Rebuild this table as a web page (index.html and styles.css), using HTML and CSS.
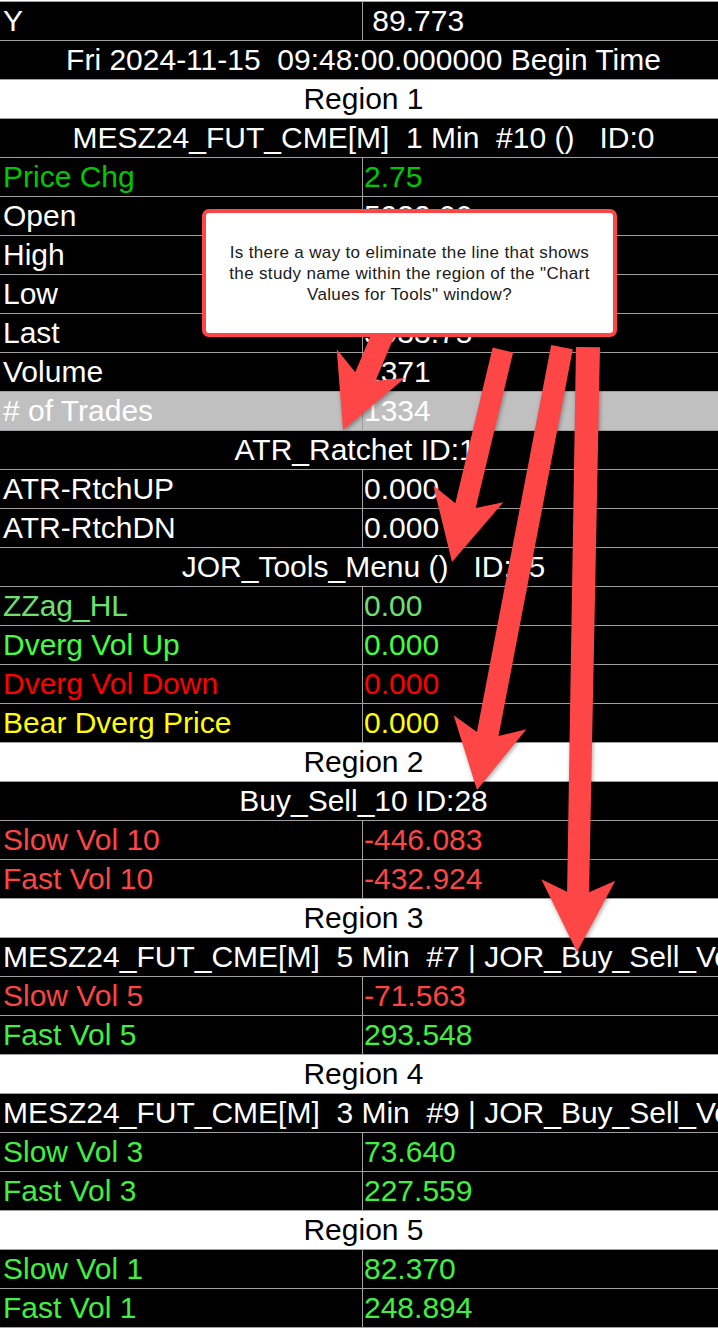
FILE: index.html
```html
<!DOCTYPE html>
<html>
<head>
<meta charset="utf-8">
<link rel="stylesheet" href="styles.css">
</head>
<body>
<div class="page">
  <div class="table">
    <div class="row kv"><span class="lab">Y</span><span class="val"> 89.773</span></div>
    <div class="row center">Fri 2024-11-15  09:48:00.000000 Begin Time</div>
    <div class="row region">Region 1</div>
    <div class="row center">MESZ24_FUT_CME[M]  1 Min  #10 ()   ID:0</div>
    <div class="row kv c-green"><span class="lab">Price Chg</span><span class="val">2.75</span></div>
    <div class="row kv"><span class="lab">Open</span><span class="val">5932.00</span></div>
    <div class="row kv"><span class="lab">High</span><span class="val">5934.50</span></div>
    <div class="row kv"><span class="lab">Low</span><span class="val">5928.75</span></div>
    <div class="row kv"><span class="lab">Last</span><span class="val">5933.75</span></div>
    <div class="row kv"><span class="lab">Volume</span><span class="val">2371</span></div>
    <div class="row kv gray"><span class="lab"># of Trades</span><span class="val">1334</span></div>
    <div class="row center">ATR_Ratchet ID:1  </div>
    <div class="row kv"><span class="lab">ATR-RtchUP</span><span class="val">0.000</span></div>
    <div class="row kv"><span class="lab">ATR-RtchDN</span><span class="val">0.000</span></div>
    <div class="row center">JOR_Tools_Menu ()   ID:15</div>
    <div class="row kv c-pale"><span class="lab">ZZag_HL</span><span class="val">0.00</span></div>
    <div class="row kv c-lime"><span class="lab">Dverg Vol Up</span><span class="val">0.000</span></div>
    <div class="row kv c-red"><span class="lab">Dverg Vol Down</span><span class="val">0.000</span></div>
    <div class="row kv c-yellow"><span class="lab">Bear Dverg Price</span><span class="val">0.000</span></div>
    <div class="row region">Region 2</div>
    <div class="row center">Buy_Sell_10 ID:28</div>
    <div class="row kv c-coral"><span class="lab">Slow Vol 10</span><span class="val">-446.083</span></div>
    <div class="row kv c-coral"><span class="lab">Fast Vol 10</span><span class="val">-432.924</span></div>
    <div class="row region">Region 3</div>
    <div class="row left">MESZ24_FUT_CME[M]  5 Min  #7 | JOR_Buy_Sell_Volume</div>
    <div class="row kv c-coral"><span class="lab">Slow Vol 5</span><span class="val">-71.563</span></div>
    <div class="row kv c-lime2"><span class="lab">Fast Vol 5</span><span class="val">293.548</span></div>
    <div class="row region">Region 4</div>
    <div class="row left">MESZ24_FUT_CME[M]  3 Min  #9 | JOR_Buy_Sell_Volume</div>
    <div class="row kv c-lime2"><span class="lab">Slow Vol 3</span><span class="val">73.640</span></div>
    <div class="row kv c-lime2"><span class="lab">Fast Vol 3</span><span class="val">227.559</span></div>
    <div class="row region">Region 5</div>
    <div class="row kv c-lime2"><span class="lab">Slow Vol 1</span><span class="val">82.370</span></div>
    <div class="row kv c-lime2"><span class="lab">Fast Vol 1</span><span class="val">248.894</span></div>
  </div>

  <svg class="arrows" width="718" height="1334" viewBox="0 0 718 1334">
    <polygon transform="translate(343 430) rotate(112.75)" points="0,0 -72,37 -58,11 -125,11 -125,-11 -58,-11 -72,-37"/>
    <polygon transform="translate(452 562) rotate(103.5)" points="0,0 -70,36 -58,10.5 -218,10.5 -218,-10.5 -58,-10.5 -70,-36"/>
    <polygon transform="translate(477 790) rotate(100.86)" points="0,0 -69,37 -57,11 -451,11 -451,-11 -57,-11 -69,-37"/>
    <polygon transform="translate(577 952) rotate(91.04)" points="0,0 -72,37 -60,11 -605,12 -605,-12 -60,-11 -72,-37"/>
  </svg>

  <div class="callout">
    <p>Is there a way to eliminate the line that shows<br>the study name within the region of the "Chart<br>Values for Tools" window?</p>
  </div>
</div>
</body>
</html>
```

FILE: styles.css
```css
html, body {
  margin: 0;
  padding: 0;
  background: #ffffff;
}

.page {
  position: relative;
  width: 718px;
  height: 1334px;
  overflow: hidden;
  font-family: "Liberation Sans", Arial, sans-serif;
}

.table {
  margin-top: 1px;
  border-bottom: 1px solid #a0a0a0;
}

.row {
  box-sizing: border-box;
  height: 39px;
  border-top: 1px solid #a0a0a0;
  background: #000000;
  color: #ffffff;
  font-size: 30px;
  line-height: 38px;
  white-space: pre;
  overflow: hidden;
}

.kv {
  display: grid;
  grid-template-columns: 363px 1fr;
}

.lab {
  box-sizing: border-box;
  border-right: 1px solid #a0a0a0;
  padding-left: 3px;
  overflow: hidden;
}

.val {
  padding-left: 1px;
  overflow: hidden;
}

.center {
  text-align: center;
  padding-left: 9px;
}

.left {
  padding-left: 3px;
}

.region {
  background: #ffffff;
  color: #000000;
  text-align: center;
  padding-left: 9px;
}

.gray {
  background: #c0c0c0;
  color: #ffffff;
}

.c-green { color: #00c800; }
.c-pale { color: #6ee06e; }
.c-lime { color: #40ff40; }
.c-lime2 { color: #40f040; }
.c-red { color: #ff0000; }
.c-yellow { color: #ffff00; }
.c-coral { color: #ff4444; }

.arrows {
  position: absolute;
  left: 0;
  top: 0;
  pointer-events: none;
  fill: #ff4646;
  filter: drop-shadow(1px 2px 2px rgba(0, 0, 0, 0.35));
}

.callout {
  position: absolute;
  left: 202px;
  top: 209px;
  width: 415px;
  height: 128px;
  box-sizing: border-box;
  border: 4px solid #ff4646;
  border-radius: 7px;
  background: #ffffff;
  display: flex;
  align-items: center;
  justify-content: center;
}

.callout p {
  margin: 0;
  text-align: center;
  font-family: "Liberation Sans", Arial, sans-serif;
  font-size: 17px;
  letter-spacing: 0.35px;
  line-height: 21px;
  color: #1a1a1a;
}
```
